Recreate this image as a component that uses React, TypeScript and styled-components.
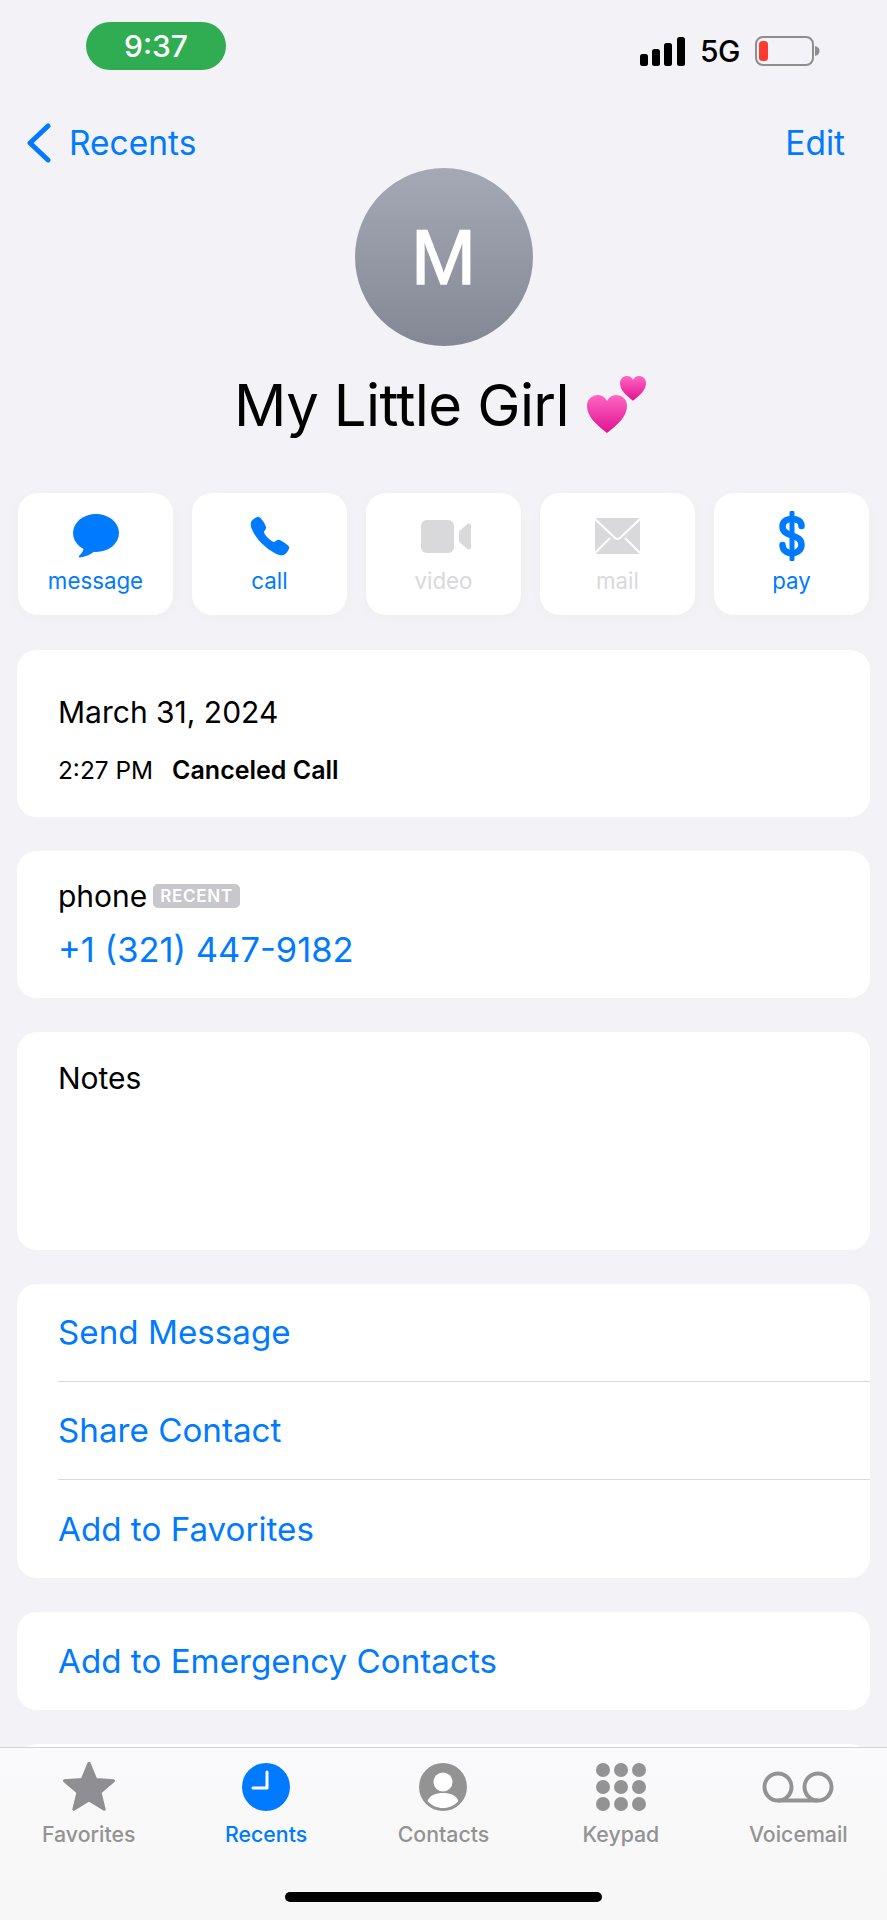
import React from 'react';
import styled, { createGlobalStyle } from 'styled-components';
import { IoCall } from 'react-icons/io5';

const BLUE = '#007aff';
const GRAY = '#8e8e93';
const FADED = '#d9d9db';

const GlobalStyle = createGlobalStyle`
  html, body {
    margin: 0;
    padding: 0;
    background: #f2f2f7;
    font-family: Inter, "Noto Sans", sans-serif;
  }
`;

const HeartPath = 'M20 38C10 30 0 22 0 11 0 4 5 0 11 0c4 0 7 2 9 6 2-4 5-6 9-6 6 0 11 4 11 11 0 11-10 19-20 27z';

const TwoHearts = () => (
  <svg width="59" height="58" viewBox="0 0 59 58">
    <defs>
      <linearGradient id="heart" x1="0" y1="0" x2="0" y2="1">
        <stop offset="0" stopColor="#ff66c4" />
        <stop offset="1" stopColor="#e0128f" />
      </linearGradient>
    </defs>
    <path d={HeartPath} fill="url(#heart)" transform="translate(33 0) scale(0.65)" />
    <path d={HeartPath} fill="url(#heart)" transform="translate(0 19)" />
  </svg>
);

const actions = [
  {
    label: 'message',
    enabled: true,
    icon: (
      <svg width="46" height="44" viewBox="0 0 46 44" fill={BLUE}>
        <ellipse cx="23" cy="19" rx="23" ry="19" />
        <path d="M11 32c0 4-2 7-5 10-.6.9 0 1.6 1 1.4 6-.9 11-3 15-6.4z" />
      </svg>
    ),
  },
  {
    label: 'call',
    enabled: true,
    icon: <IoCall size={44} color={BLUE} />,
  },
  {
    label: 'video',
    enabled: false,
    icon: (
      <svg width="54" height="33" viewBox="-4 0 54 33" fill={FADED}>
        <rect x="0" y="0" width="33" height="33" rx="6" />
        <path d="M38 12.5c0-.8.3-1.4.9-1.9l7.5-6.6c1.2-1 3.6-.4 3.6 1.5v22c0 1.900-2.400 2.500-3.600 1.500l-7.500-6.600c-.6-.5-.9-1.100-.9-1.900z" />
      </svg>
    ),
  },
  {
    label: 'mail',
    enabled: false,
    icon: (
      <svg width="45" height="36" viewBox="0 0 45 36">
        <rect width="45" height="36" rx="2" fill={FADED} />
        <path d="M0 1l19.500 18.500c1.800 1.700 4.200 1.700 6 0L45 1M0 35l15-15M45 35L30 20" fill="none" stroke="#fff" strokeWidth="2" />
      </svg>
    ),
  },
  {
    label: 'pay',
    enabled: true,
    icon: (
      <svg width="26" height="50" viewBox="0 0 26 50" fill="none" stroke={BLUE} strokeLinecap="round">
        <path d="M13 2v46" strokeWidth="5" />
        <path d="M22.500 15C22.500 10 18.500 8 13 8 7 8 3.500 11 3.500 15.500 3.500 21 8 22.500 13 24.500c5.500 2 9.500 3.500 9.500 9.500 0 4.500-4 8-9.500 8S3.500 39 3.500 34" strokeWidth="6.500" />
      </svg>
    ),
  },
];

const tabs = [
  {
    label: 'Favorites',
    active: false,
    icon: (
      <svg width="54" height="50" viewBox="0 0 54 50">
        <path
          d="M27 3l6.800 16.500 17.700 1.300-13.500 11.500 4.200 17-15.200-9.300-15.200 9.300 4.200-17L2.500 20.800l17.700-1.300z"
          fill={GRAY}
          stroke={GRAY}
          strokeWidth="3"
          strokeLinejoin="round"
          transform="translate(0 -2)"
        />
      </svg>
    ),
  },
  {
    label: 'Recents',
    active: true,
    icon: (
      <svg width="48" height="48" viewBox="0 0 48 48">
        <circle cx="24" cy="24" r="24" fill={BLUE} />
        <path d="M25 9v16H11" fill="none" stroke="#fff" strokeWidth="3" strokeLinecap="round" strokeLinejoin="round" />
      </svg>
    ),
  },
  {
    label: 'Contacts',
    active: false,
    icon: (
      <svg width="48" height="48" viewBox="0 0 48 48">
        <circle cx="24" cy="24" r="24" fill="#939393" />
        <circle cx="24" cy="19" r="9.500" fill="#fff" />
        <path d="M8.500 38C11 32 17 30 24 30s13 2 15.500 8c-4 4.500-9.500 7-15.500 7s-11.500-2.500-15.500-7z" fill="#fff" />
      </svg>
    ),
  },
  {
    label: 'Keypad',
    active: false,
    icon: (
      <svg width="50" height="48" viewBox="0 0 50 48" fill="#939393">
        {[7, 24, 41].map((cy) =>
          [7, 25, 43].map((cx) => <circle key={`${cx}-${cy}`} cx={cx} cy={cy} r="7" />),
        )}
      </svg>
    ),
  },
  {
    label: 'Voicemail',
    active: false,
    icon: (
      <svg width="72" height="48" viewBox="0 0 72 48" fill="none" stroke="#939393" strokeWidth="4">
        <circle cx="16" cy="24" r="13.500" />
        <circle cx="56" cy="24" r="13.500" />
        <path d="M16 37.500h40" />
      </svg>
    ),
  },
];

export default function App() {
  return (
    <Page>
      <GlobalStyle />
      <StatusBar>
        <TimePill>9:37</TimePill>
        <StatusIcons>
          <svg width="45" height="29" viewBox="0 0 45 29" fill="#000">
            <rect x="0" y="17" width="8" height="12" rx="2.500" />
            <rect x="12" y="12" width="8" height="17" rx="2.500" />
            <rect x="24" y="6" width="8" height="23" rx="2.500" />
            <rect x="37" y="0" width="8" height="29" rx="2.500" />
          </svg>
          <NetworkLabel>5G</NetworkLabel>
          <svg width="65" height="30" viewBox="0 0 65 30">
            <rect x="1" y="1" width="57" height="28" rx="7" fill="none" stroke="#8e8e8e" strokeWidth="2" />
            <rect x="4" y="5" width="9" height="20" rx="3.500" fill="#ff3b30" />
            <path d="M60 10c3 .8 4.500 2.500 4.500 5s-1.500 4.200-4.500 5z" fill="#8e8e8e" />
          </svg>
        </StatusIcons>
      </StatusBar>

      <NavBar>
        <BackLink>
          <svg width="24" height="40" viewBox="0 0 24 40" fill="none" stroke={BLUE} strokeWidth="5" strokeLinecap="round" strokeLinejoin="round">
            <path d="M21 3L3 20l18 17" />
          </svg>
          <NavText>Recents</NavText>
        </BackLink>
        <NavText>Edit</NavText>
      </NavBar>

      <Avatar>M</Avatar>
      <TitleRow>
        <Title>My Little Girl</Title>
        <TwoHearts />
      </TitleRow>

      <ActionGrid>
        {actions.map((action) => (
          <ActionButton key={action.label} $enabled={action.enabled}>
            <ActionIcon>{action.icon}</ActionIcon>
            <ActionLabel>{action.label}</ActionLabel>
          </ActionButton>
        ))}
      </ActionGrid>

      <CardStack>
        <DateCard>
          <DateLine>March 31, 2024</DateLine>
          <TimeLine>
            <span>2:27 PM</span>
            <strong>Canceled Call</strong>
          </TimeLine>
        </DateCard>

        <PhoneCard>
          <PhoneHeader>
            <CardLabel>phone</CardLabel>
            <Badge>RECENT</Badge>
          </PhoneHeader>
          <PhoneNumber>+1 (321) 447-9182</PhoneNumber>
        </PhoneCard>

        <NotesCard>
          <CardLabel>Notes</CardLabel>
        </NotesCard>

        <Card>
          <ActionRow $divider>Send Message</ActionRow>
          <ActionRow $divider>Share Contact</ActionRow>
          <ActionRow>Add to Favorites</ActionRow>
        </Card>

        <Card>
          <ActionRow>Add to Emergency Contacts</ActionRow>
        </Card>

        <Card>
          <ActionRow />
        </Card>
      </CardStack>

      <TabBar>
        <TabRow>
          {tabs.map((tab) => (
            <Tab key={tab.label} $active={tab.active}>
              <TabIcon>{tab.icon}</TabIcon>
              <TabLabel>{tab.label}</TabLabel>
            </Tab>
          ))}
        </TabRow>
        <HomeIndicator />
      </TabBar>
    </Page>
  );
}

const Page = styled.div`
  position: relative;
  width: 887px;
  height: 1920px;
  overflow: hidden;
  background: #f2f2f7;
  color: #000;
`;

const StatusBar = styled.div`
  display: flex;
  justify-content: space-between;
  align-items: flex-start;
  height: 48px;
  padding: 22px 67px 0 86px;
`;

const TimePill = styled.div`
  width: 140px;
  height: 48px;
  border-radius: 24px / 24px;
  background: #30ad52;
  color: #fff;
  font-size: 30px;
  font-weight: 500;
  line-height: 48px;
  text-align: center;
`;

const StatusIcons = styled.div`
  display: flex;
  align-items: center;
  height: 30px;
  margin-top: 14px;
  gap: 15px;
`;

const NetworkLabel = styled.span`
  font-size: 30px;
  font-weight: 500;
  letter-spacing: -0.5px;
  line-height: 30px;
`;

const NavBar = styled.div`
  display: flex;
  justify-content: space-between;
  align-items: center;
  height: 40px;
  margin-top: 53px;
  padding: 0 42px 0 27px;
`;

const BackLink = styled.div`
  display: flex;
  align-items: center;
  gap: 18px;
`;

const NavText = styled.span`
  color: ${BLUE};
  font-size: 33.5px;
  line-height: 40px;
`;

const Avatar = styled.div`
  width: 178px;
  height: 178px;
  margin: 5px auto 0;
  border-radius: 50%;
  background: linear-gradient(180deg, #a5a9b5, #848894);
  color: #fff;
  font-family: "Liberation Sans", Arial, sans-serif;
  font-size: 78px;
  font-weight: 400;
  line-height: 178px;
  text-align: center;
  -webkit-text-stroke: 1.5px #fff;
`;

const TitleRow = styled.div`
  display: flex;
  justify-content: center;
  align-items: center;
  gap: 18px;
  height: 84px;
  margin-top: 17px;
  padding-right: 7px;
`;

const Title = styled.h1`
  margin: 0;
  font-size: 58px;
  font-weight: 400;
  letter-spacing: -0.6px;
  line-height: 84px;
`;

const ActionGrid = styled.div`
  display: grid;
  grid-template-columns: repeat(5, 155px);
  column-gap: 19px;
  margin-top: 46px;
  padding: 0 18px;
`;

const ActionButton = styled.div<{ $enabled: boolean }>`
  display: flex;
  flex-direction: column;
  align-items: center;
  height: 122px;
  border-radius: 20px;
  background: #fff;
  box-shadow: 0 2px 14px rgba(0, 0, 0, 0.025);
  color: ${(props) => (props.$enabled ? BLUE : FADED)};
`;

const ActionIcon = styled.div`
  display: flex;
  justify-content: center;
  align-items: center;
  height: 50px;
  margin-top: 18px;
`;

const ActionLabel = styled.span`
  margin-top: 5px;
  font-size: 22.3px;
  line-height: 30px;
`;

const CardStack = styled.div`
  display: flex;
  flex-direction: column;
  gap: 34px;
  margin-top: 35px;
  padding: 0 17px;
`;

const Card = styled.div`
  border-radius: 20px;
  background: #fff;
  flex-shrink: 0;
`;

const DateCard = styled(Card)`
  height: 166.5px;
  padding: 42px 0 0 41px;
  box-sizing: border-box;
`;

const DateLine = styled.div`
  font-size: 30px;
  line-height: 40px;
`;

const TimeLine = styled.div`
  display: flex;
  align-items: baseline;
  gap: 19px;
  margin-top: 22px;
  font-size: 24.4px;
  line-height: 32px;

  strong {
    font-size: 25px;
    font-weight: 600;
  }
`;

const PhoneCard = styled(Card)`
  height: 147px;
  padding: 25px 0 0 41px;
  box-sizing: border-box;
`;

const PhoneHeader = styled.div`
  display: flex;
  align-items: center;
  gap: 6px;
`;

const CardLabel = styled.div`
  font-size: 30px;
  line-height: 40px;
`;

const Badge = styled.span`
  padding: 0 7px;
  border-radius: 5px;
  background: #c7c7cc;
  color: #fff;
  font-size: 17px;
  font-weight: 600;
  letter-spacing: 0.7px;
  line-height: 24px;
`;

const PhoneNumber = styled.div`
  margin-top: 12px;
  color: ${BLUE};
  font-size: 34.5px;
  line-height: 44px;
`;

const NotesCard = styled(Card)`
  height: 218px;
  padding: 26px 0 0 41px;
  box-sizing: border-box;
`;

const ActionRow = styled.div<{ $divider?: boolean }>`
  display: flex;
  align-items: center;
  height: 98px;
  margin-left: 41px;
  border-bottom: ${(props) => (props.$divider ? '1px solid #d9d9dc' : 'none')};
  box-sizing: border-box;
  color: ${BLUE};
  font-size: 33.2px;
`;

const TabBar = styled.div`
  position: absolute;
  left: 0;
  right: 0;
  bottom: 0;
  height: 173px;
  border-top: 1.5px solid #d4d4d6;
  box-sizing: border-box;
  background: linear-gradient(180deg, #fafafc, #f7f7f7);
`;

const TabRow = styled.div`
  display: grid;
  grid-template-columns: repeat(5, 1fr);
  padding-top: 14px;
`;

const Tab = styled.div<{ $active: boolean }>`
  display: flex;
  flex-direction: column;
  align-items: center;
  color: ${(props) => (props.$active ? BLUE : '#939393')};
`;

const TabIcon = styled.div`
  display: flex;
  justify-content: center;
  align-items: center;
  height: 50px;
`;

const TabLabel = styled.span`
  margin-top: 9px;
  font-size: 21.3px;
  font-weight: 500;
  line-height: 26px;
`;

const HomeIndicator = styled.div`
  width: 317px;
  height: 10px;
  margin: 45px auto 0;
  border-radius: 5px;
  background: #000;
`;
